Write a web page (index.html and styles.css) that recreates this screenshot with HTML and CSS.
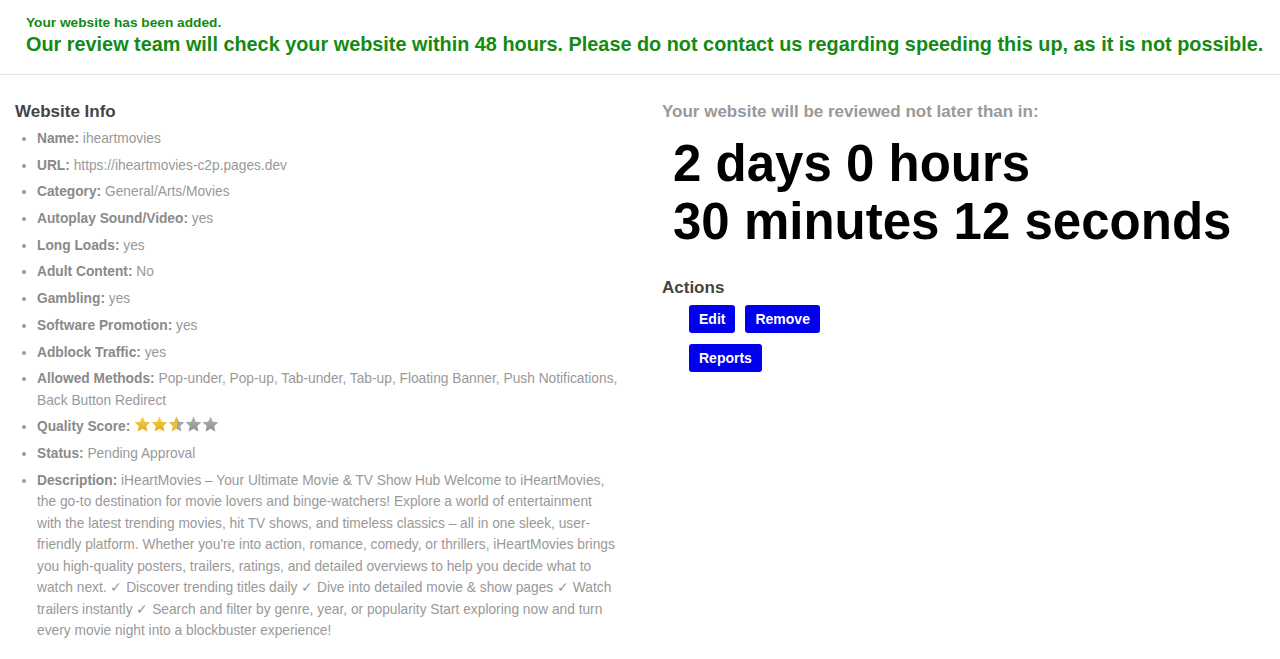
FILE: index.html
```html
<!DOCTYPE html>
<html lang="en">
  <head>
    <meta charset="UTF-8" />
    <meta name="viewport" content="width=device-width, initial-scale=1.0" />
    <title>Website Added</title>
    <link rel="stylesheet" href="styles.css">
  </head>
  <body>
    <div class="notice">
      <div class="notice-small">Your website has been added.</div>
      <div class="notice-big">Our review team will check your website within 48 hours. Please do not contact us regarding speeding this up, as it is not possible.</div>
    </div>
    <div class="content">
      <div class="info-col">
        <h2>Website Info</h2>
        <ul class="info-list">
          <li><b>Name:</b> iheartmovies</li>
          <li><b>URL:</b> https://iheartmovies-c2p.pages.dev</li>
          <li><b>Category:</b> General/Arts/Movies</li>
          <li><b>Autoplay Sound/Video:</b> yes</li>
          <li><b>Long Loads:</b> yes</li>
          <li><b>Adult Content:</b> No</li>
          <li><b>Gambling:</b> yes</li>
          <li><b>Software Promotion:</b> yes</li>
          <li><b>Adblock Traffic:</b> yes</li>
          <li><b>Allowed Methods:</b> Pop-under, Pop-up, Tab-under, Tab-up, Floating Banner, Push Notifications, Back Button Redirect</li>
          <li><b>Quality Score:</b>
            <span class="stars">
              <svg width="85" height="17" viewBox="0 0 85 17">
                <defs>
                  <linearGradient id="gold" x1="0" y1="0" x2="0" y2="1">
                    <stop offset="0" stop-color="#f7d54a" />
                    <stop offset="1" stop-color="#e0a81c" />
                  </linearGradient>
                  <linearGradient id="grey" x1="0" y1="0" x2="0" y2="1">
                    <stop offset="0" stop-color="#b4b4b4" />
                    <stop offset="1" stop-color="#8e8e8e" />
                  </linearGradient>
                  <linearGradient id="half" x1="0" y1="0" x2="1" y2="0">
                    <stop offset="0.5" stop-color="#eabf33" />
                    <stop offset="0.5" stop-color="#a3a3a3" />
                  </linearGradient>
                  <path id="star" d="M8.5 0.6l2.3 5.1 5.6 0.6-4.2 3.8 1.2 5.5-4.9-2.8-4.9 2.8 1.2-5.5-4.2-3.8 5.6-0.6z" />
                </defs>
                <use href="#star" x="0" y="0" fill="url(#gold)" />
                <use href="#star" x="17" y="0" fill="url(#gold)" />
                <use href="#star" x="34" y="0" fill="url(#half)" />
                <use href="#star" x="51" y="0" fill="url(#grey)" />
                <use href="#star" x="68" y="0" fill="url(#grey)" />
              </svg>
            </span>
          </li>
          <li><b>Status:</b> Pending Approval</li>
          <li><b>Description:</b> iHeartMovies – Your Ultimate Movie &amp; TV Show Hub Welcome to iHeartMovies, the go-to destination for movie lovers and binge-watchers! Explore a world of entertainment with the latest trending movies, hit TV shows, and timeless classics – all in one sleek, user-friendly platform. Whether you're into action, romance, comedy, or thrillers, iHeartMovies brings you high-quality posters, trailers, ratings, and detailed overviews to help you decide what to watch next. ✓ Discover trending titles daily ✓ Dive into detailed movie &amp; show pages ✓ Watch trailers instantly ✓ Search and filter by genre, year, or popularity Start exploring now and turn every movie night into a blockbuster experience!</li>
        </ul>
      </div>
      <div class="review-col">
        <h3>Your website will be reviewed not later than in:</h3>
        <div class="countdown">2 days 0 hours<br>30 minutes 12 seconds</div>
        <h2>Actions</h2>
        <div class="actions">
          <div class="action-row">
            <button>Edit</button>
            <button>Remove</button>
          </div>
          <div class="action-row">
            <button>Reports</button>
          </div>
        </div>
      </div>
    </div>
  </body>
</html>
```

FILE: styles.css
```css
body {
    margin: 0;
    padding: 0;
    font-family: "Liberation Sans", Arial, sans-serif;
    background-color: #ffffff;
}

.notice {
    padding: 14px 10px 16px 26px;
    border-bottom: 1px solid #e3e3e3;
    color: #138a13;
    font-weight: bold;
    white-space: nowrap;
}

.notice-small {
    font-size: 13.7px;
    line-height: 17px;
}

.notice-big {
    font-size: 19.85px;
    line-height: 27px;
}

.content {
    display: grid;
    grid-template-columns: 1fr 1fr;
    padding: 27px 15px 20px;
}

.info-col {
    padding-right: 21px;
}

.review-col {
    padding-left: 22px;
}

h2, h3 {
    margin: 0;
    font-size: 17px;
    line-height: 20px;
}

h2 {
    color: #444;
}

h3 {
    color: #999;
}

.info-list {
    margin: 6px 0 0;
    padding-left: 22px;
    color: #999;
    font-size: 13.75px;
    line-height: 21.5px;
}

.info-list li {
    margin-bottom: 5.2px;
}

.info-list b {
    color: #8a8a8a;
}

.stars svg {
    vertical-align: -2px;
}

.countdown {
    margin: 13px 0 27px;
    padding-left: 11px;
    font-size: 51px;
    line-height: 58px;
    font-weight: bold;
    color: #000;
}

.actions {
    padding: 7px 0 0 27px;
}

.action-row {
    display: flex;
    gap: 10px;
    margin-bottom: 11px;
}

button {
    background-color: #0000ee;
    border: none;
    color: white;
    font-family: "Liberation Sans", Arial, sans-serif;
    font-weight: bold;
    font-size: 14px;
    height: 28px;
    padding: 0 10px;
    border-radius: 3px;
    cursor: pointer;
}
```
